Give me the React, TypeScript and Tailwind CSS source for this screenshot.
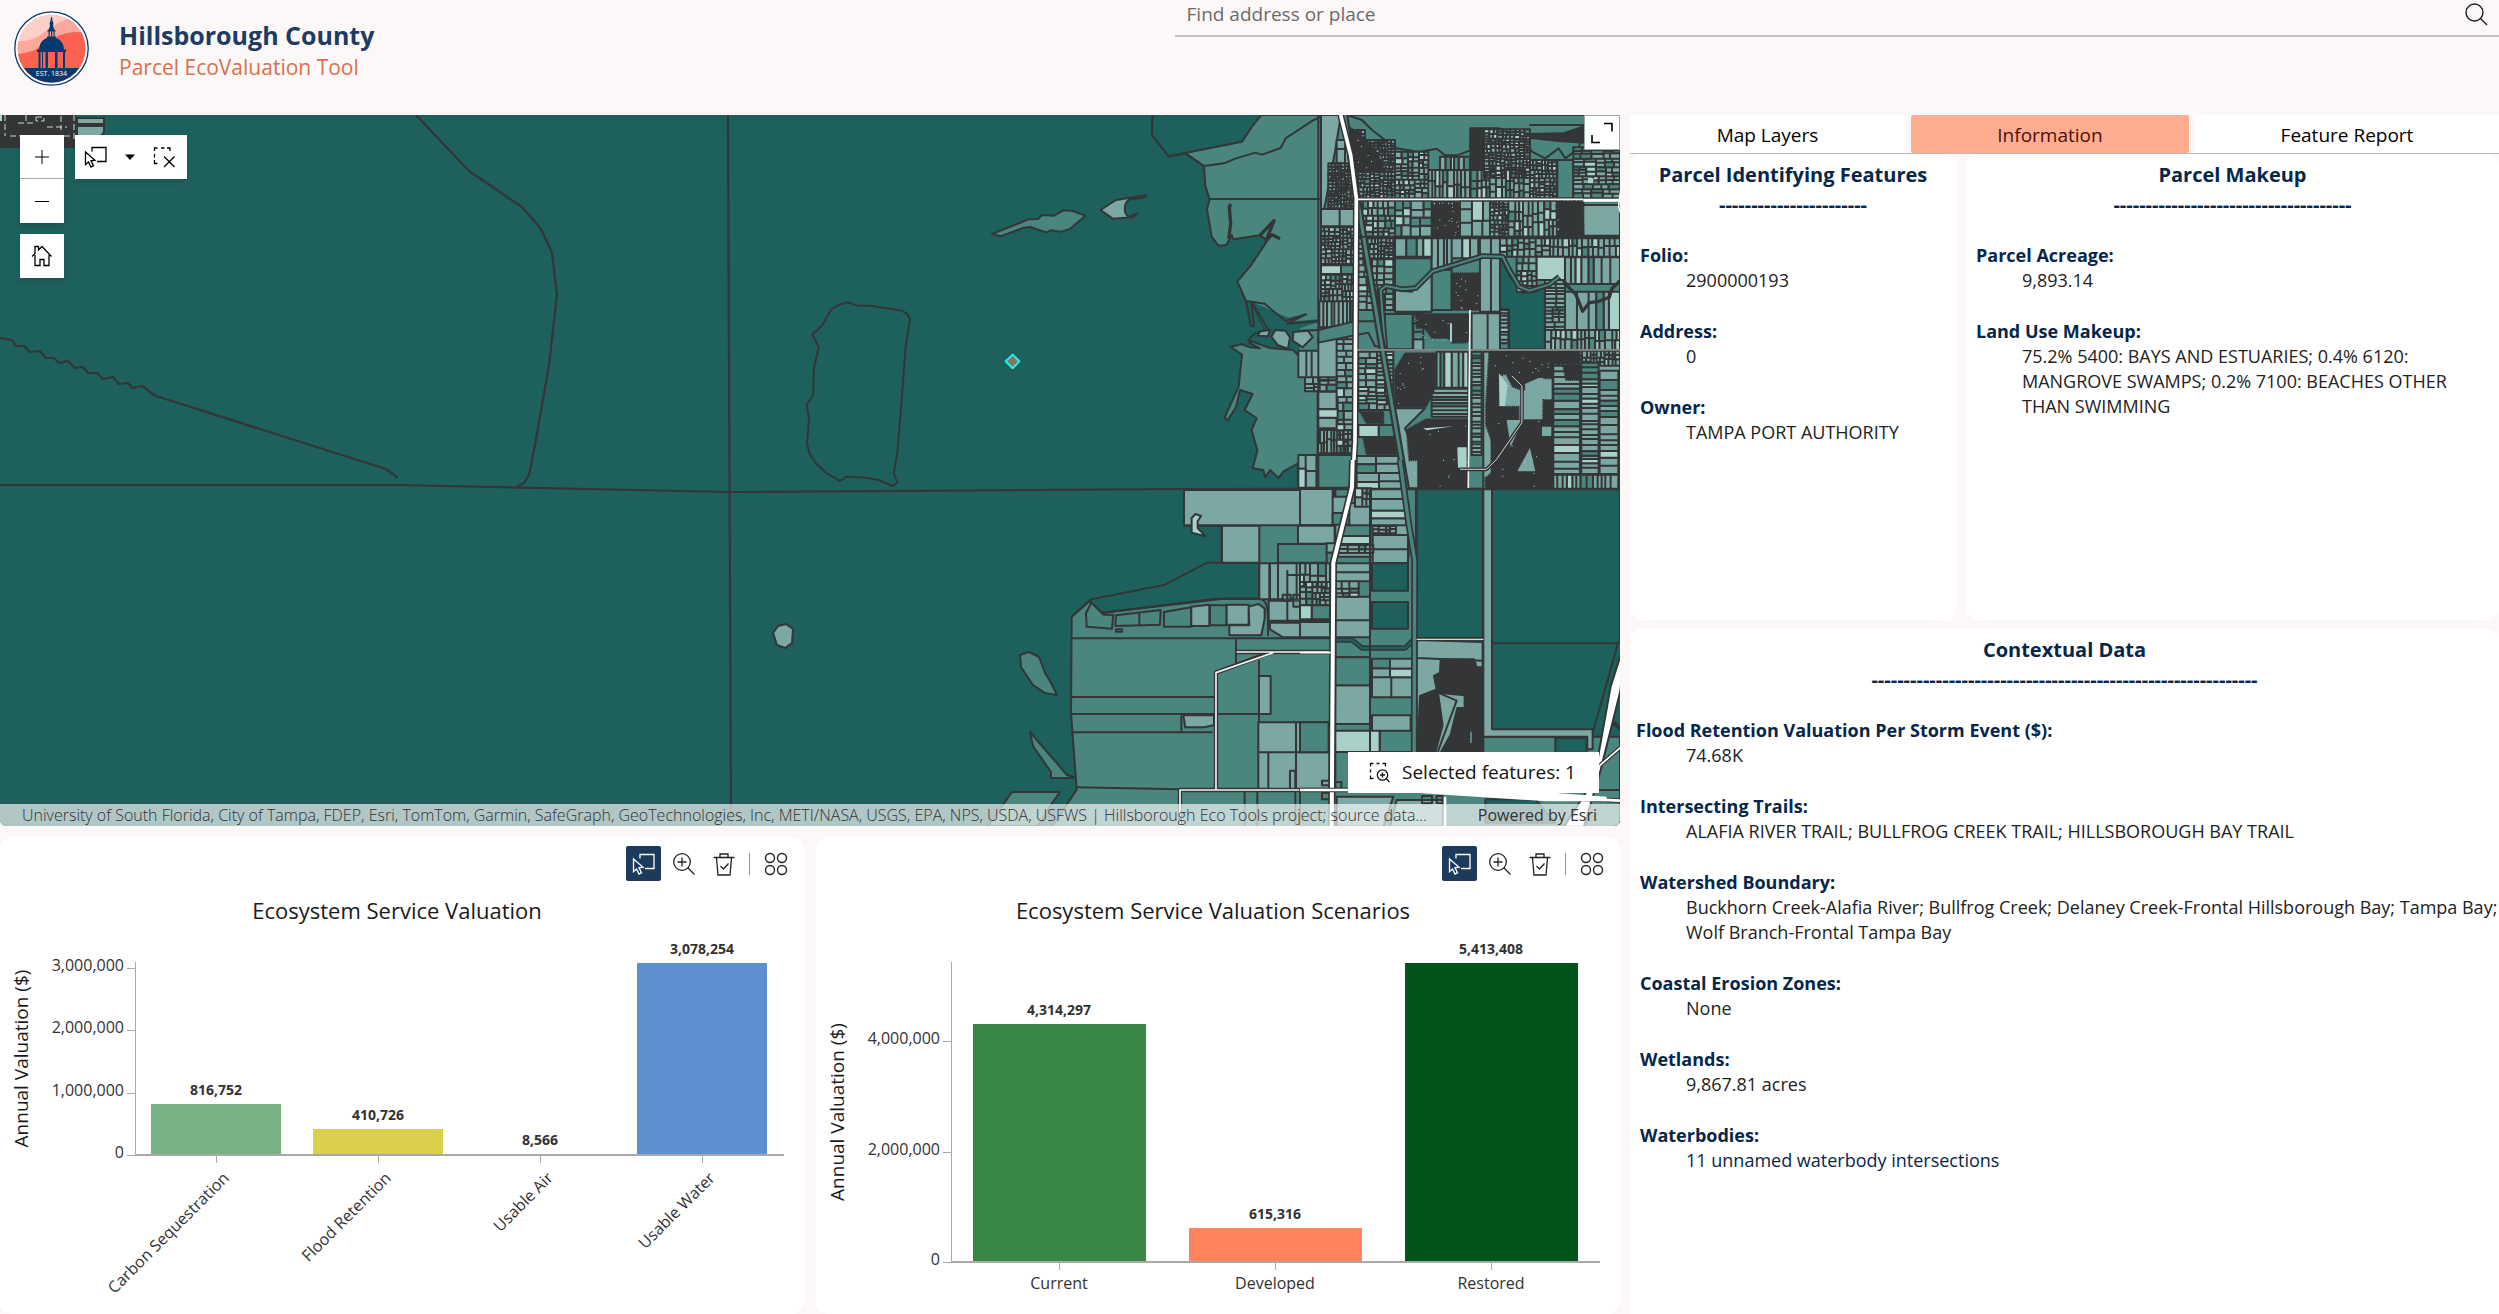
import { useState } from 'react';

const DEEP = '#1e605b';
const MID = '#4a857e';
const LIGHT = '#7ca8a3';
const PALE = '#a9d0c9';
const INK = '#333536';

// x, y, width, height, smallest lot width, smallest lot height
type Block = [number, number, number, number, number, number];

const northBlocks: Block[] = [
  [560, 90, 45, 70, 22, 26],
  [535, 160, 78, 135, 7, 7],
  [513, 297, 104, 52, 50, 50],
  [513, 352, 104, 110, 10, 9],
  [513, 466, 104, 26, 50, 24],
  [513, 494, 104, 80, 9, 11],
  [508, 574, 110, 78, 8, 50],
  [560, 655, 50, 375, 24, 14],
  [505, 680, 55, 130, 50, 100],
  [445, 722, 60, 80, 16, 70],
  [465, 802, 95, 42, 20, 11],
  [503, 845, 60, 110, 50, 30],
  [503, 960, 102, 70, 9, 30],
  [445, 1035, 55, 98, 22, 40],
  [500, 1035, 110, 98, 60, 80],
  [595, 60, 50, 90, 7, 8],
  [640, 90, 95, 95, 7, 7],
  [625, 185, 110, 80, 9, 8],
  [735, 125, 100, 140, 12, 11],
  [835, 180, 125, 85, 11, 28],
  [870, 140, 90, 40, 10, 38],
  [962, 58, 40, 122, 10, 7],
  [1002, 58, 138, 145, 9, 8],
  [962, 180, 178, 85, 11, 22],
  [1140, 150, 80, 115, 9, 9],
  [1270, 112, 140, 153, 20, 9],
  [625, 272, 110, 108, 14, 13],
  [735, 272, 110, 108, 22, 24],
  [848, 275, 82, 105, 7, 7],
  [930, 272, 90, 108, 24, 32],
  [1020, 272, 55, 108, 8, 8],
  [1075, 272, 145, 108, 12, 24],
  [1220, 268, 80, 108, 7, 7],
  [1300, 285, 110, 92, 70, 60],
  [625, 385, 105, 60, 9, 9],
  [625, 448, 105, 152, 17, 14],
  [735, 385, 110, 55, 20, 40],
  [845, 385, 60, 95, 12, 60],
  [905, 385, 80, 60, 24, 40],
  [990, 385, 60, 220, 24, 200],
  [1050, 385, 150, 55, 13, 13],
  [1100, 440, 60, 105, 13, 14],
  [1160, 440, 85, 70, 50, 60],
  [1200, 385, 210, 55, 11, 18],
  [1245, 442, 165, 80, 16, 70],
  [1185, 510, 60, 150, 18, 9],
  [1245, 545, 165, 115, 20, 80],
  [1185, 660, 225, 60, 12, 20],
  [965, 610, 110, 110, 50, 90],
  [1050, 600, 26, 118, 18, 12],
  [790, 610, 30, 110, 20, 24],
  [625, 725, 105, 175, 18, 11],
  [860, 725, 95, 108, 12, 70],
  [845, 836, 110, 84, 108, 10],
  [625, 945, 120, 36, 60, 34],
  [620, 1038, 140, 98, 50, 24],
  [965, 725, 30, 310, 28, 9],
  [1210, 722, 200, 45, 9, 12],
  [1210, 767, 80, 325, 60, 14],
  [1294, 758, 52, 334, 50, 12],
  [1349, 782, 56, 310, 50, 16],
  [1210, 1094, 195, 42, 13, 40],
];

const southBlocks: Block[] = [
  [0, 87, 98, 108, 70, 80],
  [98, 110, 50, 84, 48, 30],
  [165, 85, 48, 55, 12, 16],
  [213, 88, 106, 108, 60, 20],
  [120, 196, 92, 56, 50, 26],
  [218, 198, 70, 22, 12, 10],
  [218, 225, 106, 84, 100, 24],
  [110, 255, 110, 24, 18, 10],
  [80, 250, 28, 60, 16, 24],
  [0, 310, 78, 70, 14, 22],
  [0, 366, 90, 70, 11, 11],
  [0, 436, 90, 42, 36, 40],
  [106, 310, 104, 54, 60, 24],
  [106, 364, 70, 46, 22, 12],
  [106, 410, 104, 122, 100, 40],
  [0, 486, 90, 46, 80, 40],
  [216, 596, 120, 56, 50, 28],
  [216, 652, 120, 60, 60, 56],
  [106, 592, 104, 200, 100, 80],
  [106, 812, 230, 64, 110, 60],
  [0, 787, 86, 90, 80, 84],
];

const subdivisions = [
  'M850 285h75v95h-75z M905 490h85v110h-85z M795 612h165v80l-14 6h-40l-10-14h-50l-22-30h-24z',
  'M735 780l30-50h92v100l-28 60h-94z M630 905h70v35h-50z M640 985h100v48h-90z',
  'M770 960l58-32h127v208H806v-85h-28z M1018 725h190v80h-30l-16 35h-46l-28-10-20-40-22 10v90h60v40h80v210h-180v-35l24-20v-80l-22-60v-60z',
  'M1180 870h28v265h-60v-60l30-60z M1210 722h80v40h-80z M1240 768h48v42h-40z M590 45l55 40 40 50 20 50h-85l-22-90z',
  'M965 60h35v120h-35z M1225 275h70v100h-65z',
];

function random(seed: number) {
  let s = seed;
  return () => {
    s = (s * 16807) % 2147483647;
    return s / 2147483647;
  };
}

function splitBlocks(blocks: Block[], seed: number) {
  const rand = random(seed);
  const out: Record<string, string> = { [LIGHT]: '', [MID]: '', [PALE]: '' };

  const cut = (x: number, y: number, w: number, h: number, mw: number, mh: number) => {
    const rw = w / mw;
    const rh = h / mh;
    if (Math.max(rw, rh) < 1.9) {
      const r = rand();
      const tone = r < 0.68 ? LIGHT : r < 0.84 ? MID : PALE;
      out[tone] += `M${x} ${y}h${w}v${h}h${-w}z`;
      return;
    }
    const k = 0.38 + rand() * 0.24;
    if (rw > rh) {
      const a = Math.round(w * k);
      cut(x, y, a, h, mw, mh);
      cut(x + a, y, w - a, h, mw, mh);
    } else {
      const a = Math.round(h * k);
      cut(x, y, w, a, mw, mh);
      cut(x, y + a, w, h - a, mw, mh);
    }
  };

  blocks.forEach((b) => cut(...b));
  return Object.entries(out);
}

const northLots = splitBlocks(northBlocks, 4127);
const southLots = splitBlocks(southBlocks, 911);

const Lots = ({ lots }: { lots: [string, string][] }) => (
  <g stroke={INK} strokeWidth="6">
    {lots.map(([fill, d]) => (
      <path key={fill} d={d} fill={fill} />
    ))}
  </g>
);

const specks = (() => {
  const rand = random(77);
  const areas = [[800, 620, 150, 70], [740, 740, 110, 140], [790, 940, 160, 190], [1030, 735, 170, 60], [1040, 930, 150, 200], [600, 70, 110, 180], [855, 290, 70, 90], [910, 500, 75, 95]];
  let d = '';
  areas.forEach(([x, y, w, h]) => {
    for (let i = 0; i < 12; i++) d += `M${Math.round(x + rand() * w)} ${Math.round(y + rand() * h)}h3v3h-3z`;
  });
  return d;
})();

const ParcelMap = () => (
  <svg
    className="absolute inset-0 h-full w-full"
    viewBox="0 115 1620 711"
    preserveAspectRatio="xMidYMid slice"
    strokeLinejoin="round"
    role="img"
    aria-label="Parcel map"
  >
    <rect x="0" y="115" width="1620" height="711" fill={DEEP} />

    {/* open bay lines */}
    <g fill="none" stroke={INK} strokeWidth="2.2">
      <path d="M416 115l53 56 53 36 19 22 11 24 5 42-8 70-14 80-6 30-5 8-9 5" />
      <path d="M0 338l12 2 4 6 8 0 6 6 10-1 6 7 8 0 5 5 9-2 7 7 8-1 5 6 9 0 6 6 10-2 6 7 9-1 4 5 10-2 14 10 230 73 12 9" />
      <path d="M0 485l400 0 330 7 450-3 440-1" />
      <path d="M728 115l1 250 2 461" />
    </g>

    {/* northwest corner */}
    <path d="M0 115h76v33h-76z" fill={INK} />
    <path d="M77 118h27v6h-27z M77 126h27v6l-7 9h-20z" fill={LIGHT} stroke={INK} strokeWidth="2" />
    <path d="M5 115v21 M10 136h62 M18 123h15 M26 115v9 M61 116v14 M47 127h20 M74 115v24 M36 117h8v4h-8z" stroke="#c9d6d4" fill="none" strokeDasharray="6 3" />
    <path d="M0 115h2v6h-2z" fill={PALE} />

    {/* islands and shoals */}
    <g transform="translate(780 180) scale(.3333)" stroke={INK} strokeWidth="6">
      <path d="M636 162l110-44 28-1 12-12 36 2 28-16 28 2 38 14-46 40-26 8-32-4-12 6-50-16-18 2-70 26z" fill={MID} />
      <path d="M962 90l46-30 92-14-10 8-40 4c-20 8-22 50 0 52l22-10-14 12-60 4z" fill={LIGHT} />
      <path d="M97 464L125 438 154 388 178 374 203 367 233 377 275 377 365 392 382 402 390 418 377 500 365 660 352 820 341 880 352 908 338 918 296 900 246 892 196 890 190 898 178 903 138 878 108 850 88 820 81 790 87 716 80 675 99 645 102 565 116 502z" fill="none" />
      <path d="M698 524l20 20-20 21-21-21z" fill="#8a7263" stroke="#1ff0f0" />
    </g>
    <path d="M773 633l5-7 8-2 7 5-1 14-7 5-8-3z" fill={LIGHT} stroke={INK} strokeWidth="2" />
    <path d="M1020 655l9-3 10 5 6 16 6 10 6 12-12-2-12-8-12-18z" fill={MID} stroke={INK} strokeWidth="2" />
    <path d="M1030 732l12 14 25 29 10 3h-26v-6l-18-26z M1012 792h48l-10 14-12 20h-50z" fill={MID} stroke={INK} strokeWidth="2" />

    {/* southern flats */}
    <g transform="translate(1040 460) scale(.3333)" stroke={INK} strokeWidth="6">
      <path d="M95 470l55-50 350-4h160l-2-108h-113v-111h-113v-108h450v1020H30l80-120-17-230z" fill={MID} />
      <path d="M95 470l60-52 220-44 127-66h156v108h-130l-340 42-40-34z" fill={DEEP} />
      <path d="M432 90h448v106H432z M546 197h112v111H546z M774 197h110v54H774z" fill={LIGHT} />
      <path d="M774 0h24v84h-24z M804 0h28v84h-28z" fill={PALE} />
      <path d="M455 218v-44l12-12 16 6-10 16v20l24 25z" fill={PALE} />
      <path d="M154 428l36 36h30l-4 42-76-6-2-40z M228 466l134-16-2 44-134 4z M298 456v42 M372 456l82-14v58h-82z M510 436h50v60h-50z" fill={MID} />
      <path d="M454 440l54-6v64h-54z M560 434h66v60h-66z M626 440l30-8 18 14v30l-10 50h-96v-30h60z" fill={LIGHT} />
      <path d="M190 458l360-42h110c20 4 26 20 24 112 M228 508h18v7h-18z" fill="none" />
      <path d="M95 535h780 M588 535v74 M93 711h430 M93 762h430 M98 817h420 M110 982l310 6 M657 600v388 M530 762h126" fill="none" />
      <path d="M430 766h92v30l-30 6h-56z M657 648h35v114h-35z M655 787h214v90H655z M655 877h214v110H655z M750 932h16v55h-16z" fill={LIGHT} />
      <path d="M424 766v50 M768 787v200 M685 877v110 M614 990v110 M652 990v110 M766 990v110" fill="none" />
      <path d="M658 310h30v108h-30z M690 310h180v108H690z M686 422h184v60H686z M690 488h180v44h-140l-40-24z" fill={LIGHT} />
      <path d="M714 310v108 M742 330v150 M770 310v108 M798 340v140 M826 310v110 M854 330v150 M714 252h160v56H714z M742 345h56 M800 376h54 M800 362h20v58h-20z M728 404h24v18h-24z M760 404h24v36h-24z M800 420h54 M836 410h30v26h-30z" fill={MID} fillOpacity=".35" />
      <path d="M590 576h285 M690 578l-162 60v350 M420 1100V990h460" fill="none" strokeWidth="13" />
      <path d="M590 576h285 M700 578l-172 60v350 M420 1100V990h460" fill="none" stroke="#f3f3f3" strokeWidth="5" />
    </g>

    {/* northern shore */}
    <g transform="translate(1150 110) scale(.3333)" stroke={INK} strokeWidth="6">
      <path d="M8 15L6 75 56 139 106 130 162 168 166 228 179 268 171 298 185 380 205 407 229 405 245 375 250 388 330 376 352 392 302 467 262 515 288 573 305 575 345 660 298 698 330 715 300 712 275 702 242 711 276 734 266 830 224 922 232 932 258 892 270 840 308 852 284 900 320 925 305 960 322 1022 308 1075 340 1080 346 1102 360 1080 386 1104 400 1085 444 1060V1135L1410 1137V15z" fill={MID} />
      <path d="M8 15l-2 60 50 64 220-44 56-80z" fill={DEEP} stroke="none" />
      <path d="M8 15l-2 60 50 64 220-44 30-45 28-35 M106 130l56 38 60-8 34-14 60-18 20 6 56-20 16-30 80-52 25-12 M180 267h330" fill="none" />
      <path d="M242 282l-4 10 4 50-6 44 M330 376l42-44-24 60 18-18 24 12" fill="none" strokeWidth="10" />
      <path d="M305 575l40 85-30 10-20 20 64 25 70 5 20 25v-90l60-20v-8l-95 8 50-22-50 10z" fill={DEEP} stroke="none" />
      <path d="M288 573l14 74 10 2-8-74 40 6 30 26 34 26 60-20-56 28 96-8 M305 575l50 85-40 10-20 20 64 24 70 6 20 20 M505 660l-60 2" fill="none" />
      <path d="M376 660l30 2 14 20-6 34-30-10-20-26z M430 666l44-4 14 20-30 30-30-20z M330 665l30-6-6 20-30-2z" fill={LIGHT} />
      <path d="M513 15h60l-18 110-28 150-14 60z" fill={LIGHT} />
      <path d="M590 15l46 15 30 30 70 54 70 12 55-10 24 20h36l40-15v-66h85l70 20 30 50 40 20 40-30 20 30 40-30 20-70H1140h170V15z" fill={MID} />
      <path d="M1222 150h48v115h-48z M705 612h83v106h-83z M735 445h110v160H735z M845 480h60v120h-60z" fill={MID} />
      <path d="M735 540l50 5 60-50v110H735z M1410 290h-70v80h70z M735 895h90l-60 60 40 90v90h-70z" fill={LIGHT} />
      <path d="M1050 440l30 60 40 50 65-18v186h-108v-120h-28z" fill={DEEP} />
      <path d="M1028 725h180v410h-180z M1210 722h200v415h-200z M1000 725h25v480h-25z" fill={LIGHT} />
      <Lots lots={northLots} />
      <path d="M1140 72l100-2 65-22v50l-70-4-95-10z" fill={INK} />
      {subdivisions.map((d) => (
        <path key={d} d={d} fill={INK} strokeDasharray="4 2" />
      ))}
      <path d="M1047 790l26 34-8 64h-16z M922 1012h28v70l-26-10z M900 640h6v55h-6z M1330 204h-16v16h16z M820 955l90-6-80 12z" fill={PALE} stroke="none" />
      <path d="M1125 822l40-18h16l-10 60-44 4z M1104 1080l36-66 16 70h-52z M1070 930h50l-38 80z M1176 950h28v28h-28z" fill={LIGHT} stroke="none" />
      <path d={specks} fill="#b8c9c6" stroke="none" />
      <path d="M1240 510l14 20 24 24 20 50 20-26 30-4 30-12 8-26 24-24" fill="none" strokeWidth="10" />
      <path d="M706 720l-14-180 16-12 50 10 40-4 50-50 80-24 70-22 60 2 20 40 30 50 30 12 60-18 30-24" fill="none" strokeWidth="17" />
      <path d="M706 720l-14-180 16-12 50 10 40-4 50-50 80-24 70-22 60 2 20 40 30 50 30 12 60-18 30-24" fill="none" stroke={MID} strokeWidth="6" />
      <path d="M505 660l110-26 60 0 20 40 10 40-30-6-20-40-50 10-100 20z" fill={MID} />
      <path d="M584 15l36 240 70 420 90 525" fill="none" strokeWidth="22" />
      <path d="M584 15l36 240 70 420 90 525" fill="none" stroke={MID} strokeWidth="9" />
      <path d="M625 380h785 M620 720h790 M0 1137h1410 M505 15v650 M505 800v330" fill="none" />
      <path d="M572 15l30 120 17 130-4 730-8 140-18 75" fill="none" strokeWidth="20" />
      <path d="M572 15l30 120 17 130-4 730-8 140-18 75" fill="none" stroke="#fff" strokeWidth="11" />
      <path d="M620 268h680 M960 600l-5 535 M1412 240l-6 50 10 30" fill="none" stroke="#f4f4f4" strokeWidth="5" />
      <path d="M1300 271h110" fill="none" stroke="#fff" strokeWidth="9" />
      <path d="M930 1078h80l30-30 76-110v-110" fill="none" strokeWidth="11" />
      <path d="M930 1078h80l30-30 76-110v-110l-30-30 M620 720h790" fill="none" stroke="#cfcfcf" strokeWidth="3" />
    </g>

    {/* southeast quadrant */}
    <g transform="translate(1300 460) scale(.3333)" stroke={INK} strokeWidth="6">
      <path d="M106 88h242v1030H106z M550 830h410v290H550z" fill={MID} />
      <path d="M106 130h220v160H106z M106 592h104v200H106z M350 545h198v560H350z" fill={LIGHT} />
      <path d="M350 88h198v446H350z M576 88h384v462H576z M574 550h380l-76 270-304-10z M766 834h94v44h-94z" fill={DEEP} />
      <path d="M550 88h26v720h302v60h-16v-38H550z" fill={LIGHT} />
      <path d="M216 766h116v110H216z" fill={LIGHT} />
      <Lots lots={southLots} />
      <path d="M216 310h108v82H216z M216 426h108v80H216z" fill={DEEP} />
      <path d="M350 540l198 6v56l-198-8z" fill={LIGHT} />
      <path d="M422 598h100l8 24h18v256H352l8-170 50-20-8-40 18-10z" fill={INK} />
      <path d="M414 698l80 8v38h-22l-20 80-30 54-16-2 22-80z M508 812h10v40h-10z" fill={LIGHT} />
      <path d="M414 698l56 24-56 152" fill="none" />
      <path d="M106 540h50l30 24h130l24-24" fill="none" strokeWidth="16" />
      <path d="M106 540h50l30 24h130l24-24" fill="none" stroke={DEEP} strokeWidth="7" />
      <path d="M300 0l26 190 18 110-2 800" fill="none" strokeWidth="20" />
      <path d="M300 0l26 190 18 110-2 800" fill="none" stroke={MID} strokeWidth="10" />
      <path d="M0 990h960v110H0z" fill={MID} />
      <path d="M110 1010h170l-30 90H110z M290 1020h140v80H270z" fill={LIGHT} />
      <path d="M556 1018h150l60 70H556z" fill={DEEP} />
      <path d="M210 90v790 M66 962h26v14H66z M100 966h24v20h-24z M66 998h26v20H66z M366 1008h30v22h-30z M410 1008h18v22h-18z" fill="none" />
      <path d="M350 538h200" stroke="#d8d8d8" strokeWidth="4" />
      <path d="M158 0l-2 82-56 226-5 800" fill="none" strokeWidth="22" />
      <path d="M158 0l-2 82-56 226-5 800" fill="none" stroke="#fff" strokeWidth="12" />
      <path d="M970 560l-8 130-60 240-50 170h-60l90-140 50-280z" fill="#fff" />
      <path d="M900 916l64-56 M940 788l24 20" fill="none" strokeWidth="12" />
      <path d="M900 916l64-56 M0 578h92" fill="none" stroke="#fff" strokeWidth="5" />
      <path d="M0 990h300l460 22 200 10" fill="none" strokeWidth="14" />
      <path d="M0 990h300l460 22 200 10 M435 1010v90" fill="none" stroke="#fff" strokeWidth="8" />
      <path d="M340 998h420l160 12v14H740z" fill="#fff" stroke="none" />
    </g>
  </svg>
);

const SelectIcon = ({ className = '' }: { className?: string }) => (
  <svg className={className} width="24" height="24" viewBox="0 0 24 24" fill="none" stroke="currentColor" strokeWidth="1.3">
    <path d="M8 6.500V2.500h14v14H13" />
    <path d="M1.500 7v12.500l3-2.500 2.500 5 2.500-1.300-2.500-4.900 4-.6z" />
  </svg>
);

const ZoomInIcon = () => (
  <svg width="24" height="24" viewBox="0 0 24 24" fill="none" stroke="currentColor" strokeWidth="1.300">
    <circle cx="10" cy="10" r="8.300" />
    <path d="M10 5.500v9M5.500 10h9M16 16l6.500 6.500" />
  </svg>
);

const ClearIcon = () => (
  <svg width="24" height="24" viewBox="0 0 24 24" fill="none" stroke="currentColor" strokeWidth="1.300">
    <path d="M1.500 5.500h21M8 5.500v-3.500h8v3.500M4.500 6l1.500 17h12l1.500-17M8.500 14l3 3 5-5.500" />
  </svg>
);

const ActionsIcon = () => (
  <svg width="24" height="24" viewBox="0 0 24 24" fill="none" stroke="currentColor" strokeWidth="1.400">
    <circle cx="6" cy="6" r="4.500" />
    <circle cx="18" cy="6" r="4.500" />
    <circle cx="6" cy="18" r="4.500" />
    <circle cx="18" cy="18" r="4.500" />
  </svg>
);

const Logo = () => (
  <svg width="75" height="75" viewBox="0 0 75 75" role="img" aria-label="Hillsborough County seal">
    <defs>
      <clipPath id="seal">
        <circle cx="37.500" cy="37.500" r="34" />
      </clipPath>
    </defs>
    <circle cx="37.500" cy="37.500" r="36.700" fill="#fff" stroke="#0b3a6b" strokeWidth="1.300" />
    <g clipPath="url(#seal)">
      <rect width="75" height="75" fill="#fcd0c9" />
      <path d="M0 30c22 2 30-10 44-18 8-5 16-6 31-3v66H0z" fill="#fda89c" />
      <path d="M0 43c22 0 28-10 44-18 10-4 18-5 31-3v53H0z" fill="#fb6350" />
      <path d="M0 57h75v18H0z" fill="#053a70" />
    </g>
    <g fill="#053a70">
      <path d="M37 6h1l.5 4 1 2-.5 3 2 5h-7l2-5-.5-3 1-2z" />
      <path d="M33.500 19h8v1.500h-8zM34.500 20.500h1.200V26h-1.200zM37 20.500h1.200V26H37zM39.500 20.500h1.200V26h-1.200zM33 25.500h9V27h-9z" />
      <path d="M25 39c0-8 6-13 12.500-13S50 31 50 39zM23 38.500h29V41H23zM24.500 41h2v16h-2zM31.500 41H34v16h-2.500zM41 41h2.500v16H41zM49 41h2v16h-2zM28 41h1v16h-1z" />
    </g>
    <text x="37.500" y="65" textAnchor="middle" fontSize="7" fill="#fff">EST. 1834</text>
  </svg>
);

const MapButton = ({ label, children }: { label: string; children: React.ReactNode }) => (
  <button aria-label={label} className="flex size-11 items-center justify-center bg-white text-black">
    {children}
  </button>
);

type Bar = { name: string; value: number; color: string };

type ChartProps = {
  title: string;
  bars: Bar[];
  ticks: number[];
  base: number;
  slanted?: boolean;
};

const ChartCard = ({ title, bars, ticks, base, slanted }: ChartProps) => {
  const left = 135;
  const slot = 648 / bars.length;
  const max = Math.max(...bars.map((b) => b.value));
  const y = (v: number) => Math.round(base - (v / max) * (base - 38));
  const middle = (37 + base) / 2;

  return (
    <section className="min-w-0 flex-1 rounded-xl bg-white pt-[9px] pb-px">
      <div className="flex items-center justify-end gap-[5px] pr-[11px] text-[#222]">
        <button aria-label="Select" className="flex size-[35px] items-center justify-center rounded-[2px] bg-[#1c3a5c] text-white">
          <SelectIcon />
        </button>
        <button aria-label="Zoom in" className="flex size-[35px] items-center justify-center">
          <ZoomInIcon />
        </button>
        <button aria-label="Clear selection" className="flex size-[35px] items-center justify-center">
          <ClearIcon />
        </button>
        <div className="mx-[3px] h-[22px] w-px bg-[#9a9a9a]" />
        <button aria-label="Actions" className="flex size-[35px] items-center justify-center">
          <ActionsIcon />
        </button>
      </div>
      <h2 className="mt-[14px] pr-[10px] text-center text-[22px] leading-[30px] text-[#1a1a1a]">{title}</h2>
      <svg className="block w-full" viewBox="0 0 804 388" role="img" aria-label={title}>
        {bars.map((b, i) => {
          const cx = left + slot * (i + 0.5);
          const w = Math.round(slot * 0.8);
          return (
            <g key={b.name}>
              {base - y(b.value) > 2 && (
                <rect x={Math.round(cx - w / 2)} y={y(b.value)} width={w} height={base - y(b.value)} fill={b.color} />
              )}
              <text x={cx} y={y(b.value) - 9} textAnchor="middle" fontSize="14" fontWeight="700" fill="#323232">
                {b.value.toLocaleString('en-US')}
              </text>
              {slanted ? (
                <text transform={`translate(${cx + 14} ${base + 24}) rotate(-45)`} textAnchor="end" fontSize="16" fill="#323232">
                  {b.name}
                </text>
              ) : (
                <text x={cx} y={base + 27} textAnchor="middle" fontSize="16" fill="#323232">
                  {b.name}
                </text>
              )}
            </g>
          );
        })}
        <g stroke="#a9a9a9" strokeWidth="1" shapeRendering="crispEdges">
          <path d={`M${left} 37V${base}`} />
          <path d={`M${left} ${base}H784`} strokeWidth="2" />
          {ticks.map((t) => (
            <path key={t} d={`M${left - 8} ${y(t)}H${left}`} />
          ))}
          {bars.map((b, i) => (
            <path key={b.name} d={`M${left + slot * (i + 0.5)} ${base}v8`} />
          ))}
        </g>
        {ticks.map((t) => (
          <text key={t} x="124" y={y(t) + 3} textAnchor="end" fontSize="16" fill="#323232">
            {t.toLocaleString('en-US')}
          </text>
        ))}
        <text transform={`translate(28 ${middle}) rotate(-90)`} textAnchor="middle" fontSize="19" fill="#1a1a1a">
          Annual Valuation ($)
        </text>
      </svg>
    </section>
  );
};

const Heading = ({ title, dashes }: { title: string; dashes: number }) => (
  <div className="mb-[23px] text-center text-[20px] leading-[30px] font-bold">
    <h2>{title}</h2>
    <div aria-hidden="true">{'-'.repeat(dashes)}</div>
  </div>
);

const Facts = ({ items }: { items: [string, string][] }) => (
  <dl className="flex flex-col gap-[26px] pl-[10px] text-[18px] leading-[25px]">
    {items.map(([label, value]) => (
      <div key={label}>
        <dt className={label.startsWith('Flood') ? '-ml-1 font-bold' : 'font-bold'}>{label}</dt>
        <dd className={label === 'Waterbodies:' ? 'pl-[46px]' : 'pl-[46px] text-[#222]'}>{value}</dd>
      </div>
    ))}
  </dl>
);

const tabs = ['Map Layers', 'Information', 'Feature Report'];

export default function App() {
  const [active, setActive] = useState('Information');
  const [query, setQuery] = useState('');

  return (
    <div className="min-h-screen bg-[#fcf8f7] font-['Open_Sans',sans-serif] text-[#06264a]">
      <header className="flex h-[115px] items-start justify-between">
        <div className="flex items-start pl-[14px]">
          <div className="pt-[11px]">
            <Logo />
          </div>
          <div className="pt-[19px] pl-[30px]">
            <h1 className="text-[25px] leading-8 font-bold text-[#1d3c62]">Hillsborough County</h1>
            <p className="text-[21px] leading-8 font-medium text-[#d86f4d]">Parcel EcoValuation Tool</p>
          </div>
        </div>
        <label className="flex h-[37px] w-[53%] items-start border-b-2 border-[#c3c0c0] pr-[11px] pl-3">
          <input
            aria-label="Find address or place"
            value={query}
            onChange={(e) => setQuery(e.target.value)}
            placeholder="Find address or place"
            className="min-w-0 flex-1 bg-transparent text-[19px] leading-7 outline-none placeholder:text-[#6a6a6a]"
          />
          <svg className="mt-[2px]" width="24" height="24" viewBox="0 0 24 24" fill="none" stroke="#222" strokeWidth="1.400">
            <circle cx="10.500" cy="10.500" r="8.500" />
            <path d="M16.500 16.500l6.500 6.500" />
          </svg>
        </label>
      </header>

      <div className="grid grid-cols-[1620fr_869fr] gap-[10px]">
        <div className="flex min-w-0 flex-col gap-[11px]">
          <div className="relative h-[711px] overflow-hidden rounded-b-md">
            <ParcelMap />
            <div className="absolute top-5 left-5 flex items-start gap-[11px]">
              <div className="flex flex-col">
                <div className="divide-y divide-[#aaa] shadow-md">
                  <MapButton label="Zoom in">
                    <svg width="14" height="14" viewBox="0 0 14 14" stroke="currentColor">
                      <path d="M7 0v14M0 7h14" />
                    </svg>
                  </MapButton>
                  <MapButton label="Zoom out">
                    <svg width="14" height="14" viewBox="0 0 14 14" stroke="currentColor">
                      <path d="M0 7.500h14" />
                    </svg>
                  </MapButton>
                </div>
                <div className="mt-[11px] shadow-md">
                  <MapButton label="Default extent">
                    <svg width="22" height="22" viewBox="0 0 22 22" fill="none" stroke="currentColor" strokeWidth="1.300">
                      <path d="M1 11.500L4 8.500V1.500h3.500v3.500L11 1.500l9.500 10M4 10v10.500h5v-6h4v6h5V10" />
                    </svg>
                  </MapButton>
                </div>
              </div>
              <div className="flex h-11 items-center bg-white pr-[11px] pl-[9px] text-black shadow-md">
                <button aria-label="Select features">
                  <SelectIcon />
                </button>
                <button aria-label="Selection tools" className="ml-4 flex h-11 items-center">
                  <svg width="12" height="8" viewBox="0 0 12 8">
                    <path d="M1 1.500h10L6 7z" fill="currentColor" />
                  </svg>
                </button>
                <button aria-label="Clear selection" className="ml-[17px]">
                  <svg width="23" height="24" viewBox="0 0 23 24" fill="none" stroke="currentColor" strokeWidth="1.300">
                    <path d="M1.500 6V3h3M8 3h3.500M14 3h3v3M1.500 9v3.500M1.500 15v3.500h3" />
                    <path d="M11 11.500l10.500 10.500M21.500 11.500L11 22" />
                  </svg>
                </button>
              </div>
            </div>
            <button aria-label="Expand" className="absolute top-0 right-0 flex h-[35px] w-9 items-center justify-center border border-[#9aa] bg-white text-black">
              <svg width="22" height="22" viewBox="0 0 22 22" fill="none" stroke="currentColor" strokeWidth="1.600">
                <path d="M13 1.500h8v8M1 13v7.500h8" />
              </svg>
            </button>
            <div className="absolute right-[21px] bottom-[33px] flex h-[41px] w-[251px] items-center gap-3 bg-white pl-[21px] text-[19px] text-[#111]">
              <svg width="21" height="21" viewBox="0 0 21 21" fill="none" stroke="currentColor" strokeWidth="1.300">
                <path d="M1.500 4.500v-3h3M7.500 1.500h3M13.500 1.500h3v3M1.500 7.500v3M1.500 13.500v3h3" />
                <circle cx="13.500" cy="13" r="5.200" />
                <path d="M13.500 10.500v5M11 13h5M17.500 17l3 3" />
              </svg>
              <span>Selected features: 1</span>
            </div>
            <div className="absolute inset-x-0 bottom-0 flex h-[22px] items-center justify-between bg-white/65 pr-[23px] pl-[22px] text-[16px] whitespace-nowrap text-[#323232]">
              <span className="font-light">
                University of South Florida, City of Tampa, FDEP, Esri, TomTom, Garmin, SafeGraph, GeoTechnologies, Inc, METI/NASA, USGS, EPA, NPS, USDA, USFWS | Hillsborough Eco Tools project; source data...
              </span>
              <a href="#esri">Powered by Esri</a>
            </div>
          </div>

          <div className="flex gap-3">
            <ChartCard
              title="Ecosystem Service Valuation"
              base={230}
              slanted
              ticks={[0, 1000000, 2000000, 3000000]}
              bars={[
                { name: 'Carbon Sequestration', value: 816752, color: '#78b284' },
                { name: 'Flood Retention', value: 410726, color: '#dbd04c' },
                { name: 'Usable Air', value: 8566, color: '#9ecae1' },
                { name: 'Usable Water', value: 3078254, color: '#5d8fd1' },
              ]}
            />
            <ChartCard
              title="Ecosystem Service Valuation Scenarios"
              base={337}
              ticks={[0, 2000000, 4000000]}
              bars={[
                { name: 'Current', value: 4314297, color: '#3b8846' },
                { name: 'Developed', value: 615316, color: '#ff835b' },
                { name: 'Restored', value: 5413408, color: '#00541c' },
              ]}
            />
          </div>
        </div>

        <div className="flex min-w-0 flex-col">
          <div role="tablist" className="grid h-[39px] grid-cols-[275fr_278fr_304fr] gap-[6px] border-b border-[#bbb]">
            {tabs.map((tab) => (
              <button
                key={tab}
                role="tab"
                aria-selected={tab === active}
                onClick={() => setActive(tab)}
                className={
                  tab === active
                    ? 'rounded-[2px] bg-[#ffad90] pt-[2px] text-[19px] text-[#4a0f08]'
                    : 'bg-white pt-[2px] text-[19px] text-black'
                }
              >
                {tab}
              </button>
            ))}
          </div>

          <div className="grid h-[466px] grid-cols-[326fr_533fr] gap-[10px]">
            <section className="rounded-xl bg-white pt-[6px]">
              <Heading title="Parcel Identifying Features" dashes={23} />
              <Facts
                items={[
                  ['Folio:', '2900000193'],
                  ['Address:', '0'],
                  ['Owner:', 'TAMPA PORT AUTHORITY'],
                ]}
              />
            </section>
            <section className="rounded-xl bg-white pt-[6px]">
              <Heading title="Parcel Makeup" dashes={37} />
              <div className="pr-4">
                <Facts
                  items={[
                    ['Parcel Acreage:', '9,893.14'],
                    ['Land Use Makeup:', '75.2% 5400: BAYS AND ESTUARIES; 0.4% 6120: MANGROVE SWAMPS; 0.2% 7100: BEACHES OTHER THAN SWIMMING'],
                  ]}
                />
              </div>
            </section>
          </div>

          <section className="mt-[9px] flex-1 rounded-t-xl bg-white pt-[6px]">
            <Heading title="Contextual Data" dashes={60} />
            <Facts
              items={[
                ['Flood Retention Valuation Per Storm Event ($):', '74.68K'],
                ['Intersecting Trails:', 'ALAFIA RIVER TRAIL; BULLFROG CREEK TRAIL; HILLSBOROUGH BAY TRAIL'],
                ['Watershed Boundary:', 'Buckhorn Creek-Alafia River; Bullfrog Creek; Delaney Creek-Frontal Hillsborough Bay; Tampa Bay; Wolf Branch-Frontal Tampa Bay'],
                ['Coastal Erosion Zones:', 'None'],
                ['Wetlands:', '9,867.81 acres'],
                ['Waterbodies:', '11 unnamed waterbody intersections'],
              ]}
            />
          </section>
        </div>
      </div>
    </div>
  );
}
